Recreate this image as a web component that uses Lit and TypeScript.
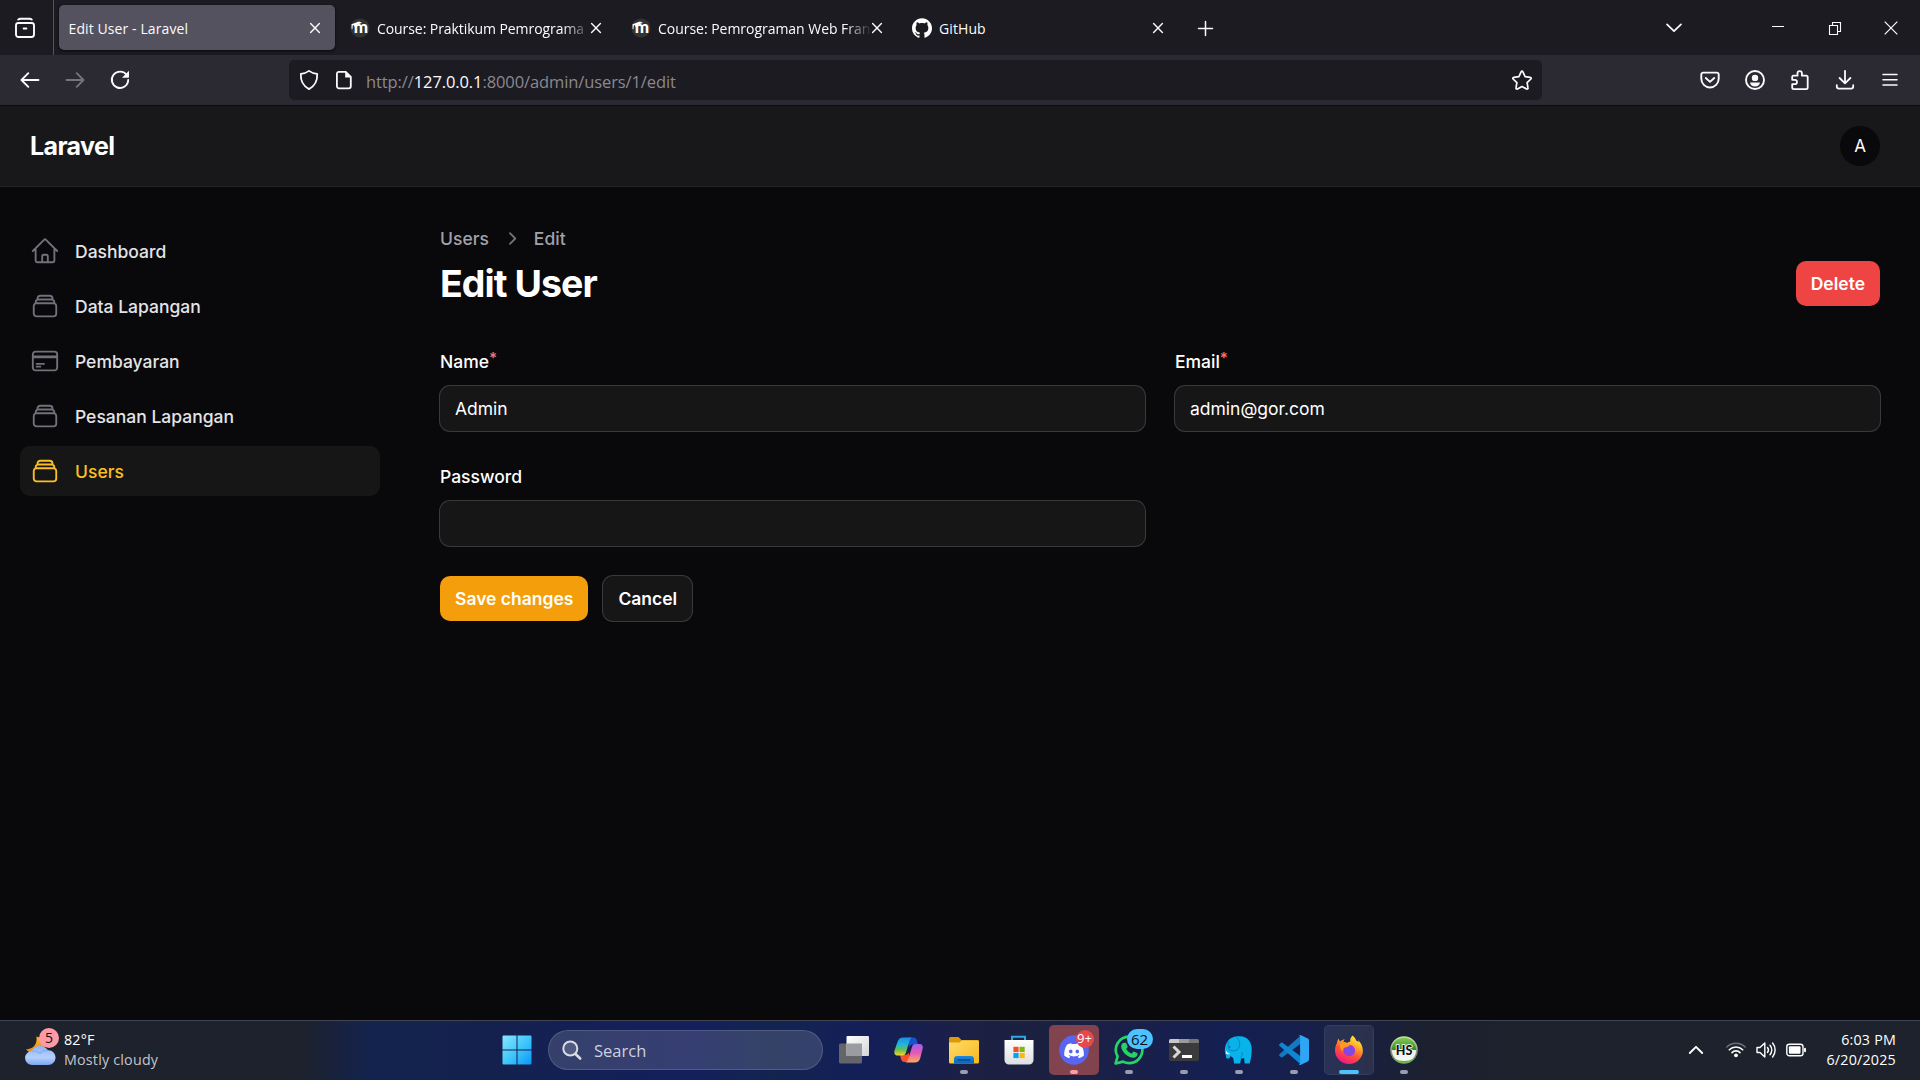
import { LitElement, html, css, svg, nothing, type TemplateResult } from "lit";
import { customElement, property } from "lit/decorators.js";
import { classMap } from "lit/directives/class-map.js";

const icon = (size: number, box: string, body: unknown, cls = "") =>
  html`<svg class="icon ${cls}" width=${size} height=${size} viewBox=${box} fill="none">${body}</svg>`;

const base = css`
  :host { box-sizing: border-box; }
  * { box-sizing: border-box; }
  .icon { display: block; flex: none; overflow: visible; }
  .ln { stroke: currentColor; stroke-linecap: round; stroke-linejoin: round; fill: none; }
`;

const UI = css`"Segoe UI", "Open Sans", "Noto Sans", sans-serif`;

/* ---------- Browser glyphs (20 unit grid) ---------- */
const g = {
  view: icon(20, "0 0 20 20", svg`<g class="ln" stroke-width="1.9"><rect x="1" y="5" width="18" height="14" rx="2.4"/><path d="M3.2 1.6C4 .9 4.6.8 5.4.8h9.2c.8 0 1.4.1 2.2.8M8.6 10.5h2.8"/></g>`),
  close: icon(10, "0 0 10 10", svg`<path class="ln" stroke-width="1.4" d="M.6.6l8.8 8.8M9.4.6.6 9.4"/>`),
  plus: icon(15, "0 0 15 15", svg`<path class="ln" stroke-width="1.5" d="M7.5.5v14M.5 7.5h14"/>`),
  down: icon(16, "0 0 16 16", svg`<path class="ln" stroke-width="1.7" d="M1 4.3 8 11.2 15 4.3"/>`),
  min: icon(14, "0 0 14 14", svg`<path stroke="currentColor" d="M1 5.5h12"/>`),
  restore: icon(14, "0 0 14 14", svg`<path stroke="currentColor" stroke-width="1.1" d="M1.5 4.5h8v9h-8zM4.5 4.500v-3h8v9h-3"/>`),
  winClose: icon(14, "0 0 14 14", svg`<path stroke="currentColor" stroke-width="1.2" d="M.7.7l12.600 12.600M13.300.7.7 13.300"/>`),
  back: icon(20, "0 0 20 20", svg`<path class="ln" stroke-width="1.9" d="M18.500 10H1.800M8.300 3.200 1.500 10l6.800 6.800"/>`),
  fwd: icon(20, "0 0 20 20", svg`<path class="ln" stroke-width="1.9" d="M1.500 10h16.700M11.700 3.200l6.800 6.800-6.800 6.800"/>`),
  reload: icon(20, "0 0 20 20", svg`<path class="ln" stroke-width="1.9" d="M16.800 5.200A8.200 8.200 0 1 0 18.200 10"/><path fill="currentColor" d="M19 .8v6.200a.8.8 0 0 1-.8.8h-6.200z"/>`),
  shield: icon(20, "0 0 20 20", svg`<path class="ln" stroke-width="1.8" d="M10 .9c2.300 1.700 5 2.700 8.200 3 .3 6.600-2 11.900-8.200 15.200C3.800 15.800 1.500 10.500 1.800 3.900c3.200-.3 5.900-1.300 8.200-3z"/>`),
  page: icon(20, "0 0 20 20", svg`<path class="ln" stroke-width="1.8" d="M4.900 1.900h6.900l5 5v9.400a2 2 0 0 1-2 2H4.900a2 2 0 0 1-2-2V3.900a2 2 0 0 1 2-2z"/><path fill="currentColor" d="M11.200 1.200v6.300h6.300z"/>`),
  star: icon(20, "0 0 20 20", svg`<path class="ln" stroke-width="1.7" d="M10 1.200c.4 0 .7.200.9.600l2.200 4.800 5.200.7c.9.100 1.200 1.100.6 1.700l-3.800 3.700.9 5.200c.200.8-.7 1.500-1.400 1.100L10 16.500l-4.600 2.500c-.7.400-1.600-.3-1.400-1.100l.9-5.200L1.100 9c-.6-.6-.3-1.600.6-1.700l5.200-.7 2.200-4.800c.200-.4.500-.6.900-.6z"/>`),
  pocket: icon(20, "0 0 20 20", svg`<g class="ln" stroke-width="1.9"><path d="M3.300 2.600h13.400a2 2 0 0 1 2 2v4.200a8.700 8.700 0 0 1-17.400 0V4.600a2 2 0 0 1 2-2z"/><path d="M5.800 8 10 11.900 14.200 8"/></g>`),
  account: icon(20, "0 0 20 20", svg`<circle class="ln" cx="10" cy="10" r="9" stroke-width="1.900"/><circle cx="10" cy="7.900" r="3.200" fill="currentColor"/><path fill="currentColor" d="M5 12.600h10c-.4 2.500-2.300 4-5 4s-4.600-1.500-5-4z"/>`),
  puzzle: icon(20, "0 0 20 20", svg`<path class="ln" stroke-width="1.8" d="M3.300 5.700h4.200V3.300a2.200 2.200 0 0 1 4.400 0v2.400h4.200a1.600 1.600 0 0 1 1.600 1.600v10.200a1.600 1.600 0 0 1-1.600 1.600H3.800a1.600 1.600 0 0 1-1.600-1.600v-3.300h2.600a2.200 2.200 0 0 0 0-4.400H2.200V6.800a1.100 1.100 0 0 1 1.100-1.100z"/>`),
  download: icon(20, "0 0 20 20", svg`<path class="ln" stroke-width="1.800" d="M10 .8v12.400M4.600 8l5.400 5.400L15.400 8M1.800 15.200v1.400a2 2 0 0 0 2 2h12.400a2 2 0 0 0 2-2v-1.400"/>`),
  menu: icon(16, "0 0 16 16", svg`<path class="ln" stroke-width="1.500" d="M1 2.400h14M1 7.700h14M1 13h14"/>`),
};

const moodle = icon(20, "0 0 20 20", svg`<circle cx="10" cy="10" r="9.600" fill="#333"/><text x="11" y="15" text-anchor="middle" font-family="Lato, sans-serif" font-weight="900" font-size="17" fill="#fff">m</text><path fill="#fff" d="M1.500 6.200 9 3.600l3 1.200-6.500 2.600-.8 2-.6-2.200-1.300 0-.4 4-.8-.2z"/>`);
const github = icon(20, "0 0 24 24", svg`<path fill="#fff" d="M12 .297c-6.630 0-12 5.373-12 12 0 5.303 3.438 9.800 8.205 11.385.6.113.82-.258.82-.577 0-.285-.01-1.040-.015-2.040-3.338.724-4.042-1.610-4.042-1.610C4.422 18.070 3.633 17.700 3.633 17.700c-1.087-.744.084-.729.084-.729 1.205.084 1.838 1.236 1.838 1.236 1.070 1.835 2.809 1.305 3.495.998.108-.776.417-1.305.76-1.605-2.665-.3-5.466-1.332-5.466-5.930 0-1.310.465-2.380 1.235-3.220-.135-.303-.54-1.523.105-3.176 0 0 1.005-.322 3.300 1.230.96-.267 1.980-.399 3-.405 1.020.006 2.040.138 3 .405 2.280-1.552 3.285-1.230 3.285-1.230.645 1.653.24 2.873.12 3.176.765.84 1.230 1.910 1.230 3.220 0 4.610-2.805 5.625-5.475 5.920.42.36.81 1.096.81 2.220 0 1.606-.015 2.896-.015 3.286 0 .315.21.69.825.570C20.565 22.092 24 17.592 24 12.297c0-6.627-5.373-12-12-12"/>`);

interface Tab { title: string; mark?: TemplateResult; active?: boolean; cls?: string; }
const tabs: Tab[] = [
  { title: "Edit User - Laravel", active: true, cls: "t1" },
  { title: "Course: Praktikum Pemrograma", mark: moodle, cls: "t2" },
  { title: "Course: Pemrograman Web Fran", mark: moodle, cls: "t3" },
  { title: "GitHub", mark: github, cls: "t4" },
];

@customElement("browser-chrome")
class BrowserChrome extends LitElement {
  static styles = [base, css`
    :host { display: block; flex: none; font-family: ${UI}; color: #fbfbfe; }
    .tabs { height: 55px; background: #1c1b22; display: flex; align-items: center; }
    .view { width: 54px; height: 55px; border-right: 1px solid #55545c; display: flex; align-items: center; justify-content: center; padding-right: 3px; padding-top: 1px; }
    .strip { display: flex; gap: 5px; padding-left: 5px; flex: 1; align-items: center; }
    .tab { width: 276px; height: 45px; border-radius: 5px; padding: 0 15px 0 9.500px; display: flex; align-items: center; }
    .active { background: #54525e; box-shadow: 0 1px 3px rgba(0, 0, 0, .8); }
    .fav { margin-right: 7.500px; }
    .title { flex: 1; min-width: 0; overflow: hidden; white-space: nowrap; font-size: 14px; line-height: 22px; padding-top: 2px; letter-spacing: .1px; }
    .t2 .title, .t3 .title { letter-spacing: -.07px; -webkit-mask-image: linear-gradient(90deg, #000 calc(100% - 28px), transparent); mask-image: linear-gradient(90deg, #000 calc(100% - 28px), transparent); }
    .t3 .title { letter-spacing: -.03px; }
    .new { width: 44px; display: flex; justify-content: center; padding-top: 2px; }
    .slot { display: flex; align-items: center; justify-content: center; }
    .win { display: flex; padding-right: .500px; }
    .win .slot { width: 56.500px; }
    .list { width: 45px; margin-right: 53.500px; }
    .bar { height: 50px; background: #2b2a33; display: flex; align-items: center; padding: 0 7.500px; }
    .bar .slot { width: 45px; height: 40px; }
    .dim { color: #75747c; }
    .url { margin-left: 146.500px; width: 1253px; height: 40px; border-radius: 5px; background: #1c1b22; display: flex; align-items: center; padding: 0 3px 0 2px; }
    .bar .url .slot { width: 35px; }
    .addr { flex: 1; font-size: 16.500px; line-height: 24px; padding: 3px 0 0 5px; color: #8a898f; white-space: nowrap; letter-spacing: -.1px; }
    .addr b { color: #fbfbfe; font-weight: 400; }
    .gap { flex: 1; }
    .edge { height: 1px; background: #0c0c0d; }
  `];
  render() {
    return html`
      <div class="tabs">
        <div class="view">${g.view}</div>
        <div class="strip">
          ${tabs.map(t => html`<div class="tab ${classMap({ active: !!t.active, [t.cls ?? ""]: true })}">
            ${t.mark ? html`<span class="fav">${t.mark}</span>` : nothing}
            <span class="title">${t.title}</span>${g.close}
          </div>`)}
          <div class="new">${g.plus}</div>
        </div>
        <div class="slot list">${g.down}</div>
        <div class="win"><div class="slot">${g.min}</div><div class="slot">${g.restore}</div><div class="slot">${g.winClose}</div></div>
      </div>
      <div class="bar">
        <div class="slot">${g.back}</div><div class="slot dim">${g.fwd}</div><div class="slot">${g.reload}</div>
        <div class="url">
          <div class="slot">${g.shield}</div><div class="slot">${g.page}</div>
          <div class="addr">http://<b>127.0.0.1</b>:8000/admin/users/1/edit</div>
          <div class="slot">${g.star}</div>
        </div>
        <div class="gap"></div>
        ${[g.pocket, g.account, g.puzzle, g.download, g.menu].map(i => html`<div class="slot">${i}</div>`)}
      </div>
      <div class="edge"></div>`;
  }
}

/* ---------- Admin panel ---------- */
const HOME = "m2.250 12 8.954-8.955c.44-.439 1.152-.439 1.591 0L21.750 12M4.500 9.750v10.125c0 .621.504 1.125 1.125 1.125H9.750v-4.875c0-.621.504-1.125 1.125-1.125h2.250c.621 0 1.125.504 1.125 1.125V21h4.125c.621 0 1.125-.504 1.125-1.125V9.750M8.250 21h8.250";
const STACK = "M6 6.878V6a2.250 2.250 0 0 1 2.250-2.250h7.500A2.250 2.250 0 0 1 18 6v.878m-12 0c.235-.083.487-.128.75-.128h10.500c.263 0 .515.045.75.128m-12 0A2.250 2.250 0 0 0 4.500 9v.878m13.500-3A2.250 2.250 0 0 1 19.500 9v.878m0 0a2.246 2.246 0 0 0-.75-.128H5.250c-.263 0-.515.045-.75.128m15 0A2.250 2.250 0 0 1 21 12v6a2.250 2.250 0 0 1-2.250 2.250H5.250A2.250 2.250 0 0 1 3 18v-6c0-.98.626-1.813 1.500-2.122";
const CARD = "M2.250 8.250h19.500M2.250 9h19.500m-16.500 5.250h6m-6 2.250h3m-3.750 3h15a2.250 2.250 0 0 0 2.250-2.250V6.750A2.250 2.250 0 0 0 19.500 4.500h-15a2.250 2.250 0 0 0-2.250 2.250v10.500A2.250 2.250 0 0 0 4.500 19.500Z";
const nav = [
  { label: "Dashboard", d: HOME },
  { label: "Data Lapangan", d: STACK },
  { label: "Pembayaran", d: CARD },
  { label: "Pesanan Lapangan", d: STACK },
  { label: "Users", d: STACK, active: true },
];

@customElement("form-field")
class FormField extends LitElement {
  @property() label = "";
  @property() value = "";
  @property({ type: Boolean }) required = false;
  static styles = [base, css`
    :host { display: grid; gap: 10px; }
    .label { font-weight: 500; line-height: 30px; height: 30px; padding-top: 1px; color: #fff; display: flex; }
    .req { color: #f87171; font-size: 15px; line-height: 21px; font-weight: 600; }
    .input { height: 45px; border-radius: 10px; background: #161617; box-shadow: 0 0 0 1px #39393b; color: #fff; line-height: 45px; padding: 0 15px; }
  `];
  render() {
    return html`<div class="label">${this.label}${this.required ? html`<span class="req">*</span>` : nothing}</div>
      <div class="input">${this.value}</div>`;
  }
}

@customElement("admin-panel")
class AdminPanel extends LitElement {
  static styles = [base, css`
    :host { display: flex; flex-direction: column; flex: 1; background: #09090b; color: #fff; font-family: Inter, sans-serif; font-size: 17.500px; }
    .top { height: 81px; flex: none; background: #18181a; border-bottom: 1px solid #242426; display: flex; justify-content: space-between; align-items: center; padding: 0 40px 0 30px; }
    .brand { font-size: 25px; font-weight: 700; letter-spacing: -.625px; }
    .avatar { width: 40px; height: 40px; border-radius: 50%; background: #09090b; display: grid; place-items: center; font-size: 17px; }
    .body { flex: 1; display: flex; }
    .nav { width: 400px; padding: 39px 20px; display: flex; flex-direction: column; gap: 5px; }
    .item { height: 50px; border-radius: 10px; padding: 0 10px; display: flex; align-items: center; gap: 15px; font-weight: 500; color: #e4e4e7; }
    .item .icon { color: #71717a; }
    .on, .on .icon { color: #fbbf24; }
    .on { background: #161617; }
    .main { flex: 1; padding: 39px 40px; }
    .crumbs { display: flex; align-items: center; gap: 10px; line-height: 25px; font-weight: 500; color: #a1a1aa; }
    .crumbs .icon { color: #71717a; }
    .head { display: flex; justify-content: space-between; align-items: center; margin: 10px 0 40px; }
    .h1 { font-size: 37.500px; line-height: 45px; font-weight: 700; letter-spacing: -.94px; }
    .btn { height: 45px; border-radius: 10px; padding: 0 15px; line-height: 45px; font-weight: 600; color: #fff; }
    .danger { background: #ef4444; }
    .primary { background: #f59e0b; }
    .gray { background: #161617; box-shadow: 0 0 0 1px #39393b; }
    .form { display: grid; grid-template-columns: 1fr 1fr; gap: 30px; }
    .actions { display: flex; gap: 15px; margin-top: 30px; }
  `];
  render() {
    return html`
      <div class="top"><div class="brand">Laravel</div><div class="avatar">A</div></div>
      <div class="body">
        <div class="nav">${nav.map(n => html`<div class="item ${classMap({ on: !!n.active })}">
          ${icon(30, "0 0 24 24", svg`<path class="ln" stroke-width="1.500" d=${n.d}/>`)}<span>${n.label}</span></div>`)}</div>
        <div class="main">
          <div class="crumbs"><span>Users</span>
            ${icon(25, "0 0 20 20", svg`<path fill="currentColor" d="M8.220 5.220a.75.75 0 0 1 1.060 0l4.250 4.250a.75.75 0 0 1 0 1.060l-4.250 4.250a.75.75 0 0 1-1.060-1.060L11.940 10 8.220 6.280a.75.75 0 0 1 0-1.060Z"/>`)}
            <span>Edit</span></div>
          <div class="head"><div class="h1">Edit User</div><div class="btn danger">Delete</div></div>
          <div class="form">
            <form-field label="Name" value="Admin" required></form-field>
            <form-field label="Email" value="admin@gor.com" required></form-field>
            <form-field label="Password"></form-field>
          </div>
          <div class="actions"><div class="btn primary">Save changes</div><div class="btn gray">Cancel</div></div>
        </div>
      </div>`;
  }
}

/* ---------- Taskbar ---------- */
const b30 = (body: unknown) => icon(30, "0 0 30 30", body);
const a = {
  weather: icon(34, "0 0 34 34", svg`<defs><linearGradient id="mo" x1="0" y1="0" x2="0" y2="1"><stop stop-color="#f9b931"/><stop offset="1" stop-color="#ee8113"/></linearGradient><linearGradient id="cl" x1="0" y1="0" x2="0" y2="1"><stop stop-color="#8fb4f5"/><stop offset=".6" stop-color="#b4d0fb"/><stop offset="1" stop-color="#7fa5f0"/></linearGradient></defs>
    <path fill="url(#mo)" d="M11.500 3.500c6 1.500 9.500 7 7.500 12.500-3 6.500-12 7-18 .5 7.500-.5 11.500-5.500 10.500-13z"/>
    <path fill="url(#cl)" d="M7.500 32a7 7 0 0 1-.8-14c1.600-3.100 4.700-5 8.300-5 3.400 0 6.300 1.700 7.900 4.300 4.400-.3 7.600 3.100 7.600 7.200 0 4.300-3.200 7.500-7.500 7.500z"/><path d="M7 18.500c3-1 6-.2 8 2 1.500-2 4.500-3.300 8-3" stroke="#86aaf0" stroke-width="1.200"/>`),
  start: b30(svg`<defs><linearGradient id="st" gradientUnits="userSpaceOnUse" x1="0" y1="0" x2="30" y2="30"><stop stop-color="#8be6ff"/><stop offset=".5" stop-color="#42c8fb"/><stop offset="1" stop-color="#0a94f7"/></linearGradient></defs><path fill="url(#st)" d="M1.500.5H14.500V14.500H.5V1.500a1 1 0 0 1 1-1zM15.500 .5h13a1 1 0 0 1 1 1V14.500H15.500zM.5 15.500H14.500v14H1.500a1 1 0 0 1-1-1zM15.500 15.500h14v13a1 1 0 0 1-1 1H15.500z"/>`),
  search: icon(20, "0 0 20 20", svg`<circle cx="8.300" cy="8.500" r="7" fill="rgba(255,255,255,.14)" stroke="#d9dce6" stroke-width="2"/><path d="m13.500 14 4.700 4.500" stroke="#d9dce6" stroke-width="2.600" stroke-linecap="round"/>`),
  tasks: b30(svg`<defs><linearGradient id="tv" x1="0" y1="0" x2="1" y2="1"><stop stop-color="#fff"/><stop offset="1" stop-color="#d5d5d8"/></linearGradient></defs><rect x="0" y="8.500" width="23" height="20" rx="1.500" fill="#63656a"/><rect x="7.500" y="1" width="22.500" height="20" rx="1" fill="url(#tv)"/><path fill="#9a9ca1" d="M7.500 8.500H23V21H7.500z"/>`),
  copilot: b30(svg`<defs><linearGradient id="c1" x1="0" y1="0" x2="0" y2="1"><stop stop-color="#1a8fe8"/><stop offset=".4" stop-color="#22b7d6"/><stop offset=".7" stop-color="#6cc04a"/><stop offset="1" stop-color="#ffd02f"/></linearGradient><linearGradient id="c2" x1="0" y1="0" x2="0" y2="1"><stop stop-color="#a15cf0"/><stop offset=".5" stop-color="#e45bb4"/><stop offset="1" stop-color="#ffab5e"/></linearGradient></defs>
    <path fill="#1553cf" d="M14 2.500h5.500c2 0 2.700 1 3.300 3l1.200 4h-5c-2 0-3 1-3.500 3z"/><path fill="#f2522d" d="M16 27h-5.500c-2 0-2.900-1-3.500-3l-1-4h5c2 0 3-1 3.600-3z"/>
    <path fill="url(#c1)" d="M9.500 2.500h8.500c-1.500.5-2 1.700-2.500 3.500L12 17.500c-.6 2-1.600 3-3.600 3H4c-3 0-4.300-2-3.500-5L3.700 6.500C4.600 3.800 6.300 2.500 9.500 2.500z"/>
    <path fill="url(#c2)" d="M20.500 27.500H11.500c1.500-.5 2.300-1.700 2.800-3.500L18 12c.6-2 1.600-3 3.600-3H25c3.300 0 4.400 2 3.600 5l-2.500 9.500c-.8 2.700-2.400 4-5.600 4z"/>`),
  files: b30(svg`<defs><linearGradient id="fo" x1="0" y1="0" x2="1" y2="1"><stop stop-color="#ffdc6b"/><stop offset="1" stop-color="#f9b71c"/></linearGradient><linearGradient id="fb" x1="0" y1="0" x2="0" y2="1"><stop stop-color="#1c8be0"/><stop offset="1" stop-color="#0b64b8"/></linearGradient></defs><path fill="#dc9b06" d="M1.500 2h8l3 3h16A1.500 1.500 0 0 1 30 6.500V14H0V3.500A1.500 1.500 0 0 1 1.500 2z"/><path fill="url(#fo)" d="M0 7.500h10.500L13 5.500h16a1 1 0 0 1 1 1V27a1.500 1.500 0 0 1-1.500 1.500h-27A1.500 1.500 0 0 1 0 27z"/><path fill="url(#fb)" d="M5 28.500V24a3 3 0 0 1 3-3h14a3 3 0 0 1 3 3v4.500z"/><path stroke="#0c4a8c" stroke-width="1.300" stroke-linecap="round" d="M9 25h12"/>`),
  store: b30(svg`<defs><linearGradient id="so" x1="0" y1="0" x2="0" y2="1"><stop stop-color="#fff"/><stop offset="1" stop-color="#dcdee1"/></linearGradient></defs><g transform="translate(-.5 0)"><path d="M8.500 7V1.800h13V7" stroke="#2aa9e8" stroke-width="2"/><path fill="url(#so)" d="M1 5h29v20a4.500 4.500 0 0 1-4.500 4.500h-20A4.500 4.500 0 0 1 1 25z"/><path fill="#f25022" d="M9.900 11.800h5.200v5.200H9.900z"/><path fill="#7fba00" d="M16 11.800h5.200v5.200H16z"/><path fill="#00a4ef" d="M9.900 17.900h5.200v5.200H9.900z"/><path fill="#ffb900" d="M16 17.900h5.200v5.200H16z"/></g>`),
  discord: b30(svg`<circle cx="15" cy="15" r="14.800" fill="#5865f2"/><path transform="translate(5.200 5.800) scale(.82)" fill="#fff" d="M20.317 4.370a19.791 19.791 0 0 0-4.885-1.515.074.074 0 0 0-.079.037c-.211.375-.445.865-.608 1.250-1.845-.276-3.680-.276-5.487 0-.164-.393-.406-.874-.618-1.250a.077.077 0 0 0-.079-.037 19.736 19.736 0 0 0-4.885 1.515.07.07 0 0 0-.032.028C.533 9.046-.319 13.580.099 18.058a.082.082 0 0 0 .031.056c2.053 1.508 4.041 2.423 5.993 3.029a.078.078 0 0 0 .084-.028c.462-.63.873-1.295 1.226-1.994a.076.076 0 0 0-.042-.106 13.107 13.107 0 0 1-1.872-.892.077.077 0 0 1-.008-.128c.126-.094.252-.192.372-.291a.074.074 0 0 1 .078-.011c3.928 1.793 8.180 1.793 12.061 0a.074.074 0 0 1 .079.010c.12.099.246.198.373.292a.077.077 0 0 1-.007.128 12.299 12.299 0 0 1-1.873.891.077.077 0 0 0-.041.107c.36.698.772 1.363 1.225 1.993a.076.076 0 0 0 .084.029c1.961-.607 3.950-1.522 6.002-3.029a.077.077 0 0 0 .031-.055c.5-5.177-.838-9.674-3.549-13.660a.061.061 0 0 0-.031-.029zM8.020 15.331c-1.183 0-2.157-1.086-2.157-2.419s.956-2.419 2.157-2.419c1.211 0 2.176 1.095 2.157 2.419 0 1.333-.956 2.419-2.157 2.419zm7.975 0c-1.183 0-2.157-1.086-2.157-2.419s.955-2.419 2.157-2.419c1.211 0 2.176 1.095 2.157 2.419 0 1.333-.946 2.419-2.157 2.419z"/>`),
  whatsapp: b30(svg`<path d="M15 1.600A13.300 13.300 0 0 1 15.200 28.200c-2.300 0-4.400-.6-6.200-1.600L1.600 28.500l2-7A13.300 13.300 0 0 1 15 1.600z" stroke="#25d366" stroke-width="2.700" stroke-linejoin="round"/><path fill="#25d366" d="M10 7.800h1.400c.5 0 .8.200 1 .7l1.200 2.900c.2.400.1.700-.2 1.100l-1.200 1.500c1.300 2.200 3 3.700 5.400 4.700l1.500-1.700c.3-.4.700-.5 1.100-.3l2.800 1.400c.5.200.7.500.6 1-.2 2.400-2 3.700-4.200 3.700-5.600 0-12.200-6.300-12.200-11.500 0-1.500 1.200-3.500 2.800-3.500z"/>`),
  terminal: b30(svg`<rect y="4" width="30" height="22" rx="1.800" fill="#3b3b3d"/><path fill="#c8c8c8" d="M1.800 4H10v4H0V5.800A1.800 1.800 0 0 1 1.800 4z"/><path fill="#9b9b9b" d="M10 4h10v4H10z"/><path fill="#777" d="M20 4h8.200A1.800 1.800 0 0 1 30 5.800V8H20z"/><path d="m4.500 11.500 5.500 5.500-5.500 5.500" stroke="#d8d8d8" stroke-width="3"/><path fill="#fff" d="M13 20h10v3H13z"/>`),
  herd: b30(svg`<g transform="translate(-.8 0)"><path fill="#08b2ea" d="M4 7C6 3 11 1 17 1.200 24.500 1.500 28.500 7 28.500 14c0 5-.4 9-2 14.500h-5l-.6-5.500c-1 .5-2 .7-3 .7l-1 4.800h-6L10 23c-1.200-.5-2-1.300-2.600-2.300-.4 2.300-1.700 3.200-3.400 2.800-1.500-.3-1.600-1.800-1-2.500C1 17.500 1.200 11 4 7z"/><path d="M5.500 6.500C4 10 5 15 8 15.500c5 1.500 8.500-2 8.500-6.500 0-3-1.300-5.500-3.500-7M19 17c.3 2.500-.5 5-2 6.500" stroke="#057fae" stroke-width=".9"/><path fill="#fff" d="M3 15.500c.6 2 2 3 4 3.200-1 1-3.600.7-4.300-.7z"/><circle cx="6.500" cy="12" r=".8" fill="#045f85"/></g>`),
  code: b30(svg`<path fill="#1478c2" d="M22 .3v8.200L3.500 22.300c-.5.400-1 .3-1.400 0L.4 20.700a1 1 0 0 1 0-1.500z"/><path fill="#0f86d3" d="M22 29.700v-8.200L3.500 7.700c-.5-.4-1-.3-1.400 0L.4 9.300a1 1 0 0 0 0 1.500z"/><path fill="#2ea5f5" d="M22 .2 28.800 3.500c.7.400 1.200 1 1.200 1.900v19.200c0 .9-.5 1.500-1.200 1.900L22 29.800c-1.200.4-2 .1-2.800-.6.900.5 1.900.1 1.900-1.200V2c0-1.300-1-1.700-1.900-1.200.8-.7 1.600-1 2.800-.6z"/>`),
  firefox: b30(svg`<defs><linearGradient id="ff" x1=".8" y1="0" x2=".3" y2="1"><stop stop-color="#fff04a"/><stop offset=".3" stop-color="#ffb52a"/><stop offset=".6" stop-color="#ff5634"/><stop offset="1" stop-color="#f0128a"/></linearGradient><radialGradient id="fp"><stop stop-color="#6b55e8"/><stop offset="1" stop-color="#9b3bdc"/></radialGradient></defs><path fill="url(#ff)" d="M18.500.5c2 1.500 3.200 3.300 3.800 5.200 1.200.4 1.800 1 2.200 1.800 0-1-.2-1.700-.5-2.500 3 2.500 4.900 6.500 4.900 10.800C28.900 23 22.700 29 15 29S1 23 1 15.500c0-3.500 1-6.200 2-7.500.2-1.800.7-3.200 1.600-4.500.3 1.500.8 2.300 1.700 3C7.600 5 9.300 4.400 10.800 4.200c-.8.8-1.300 1.600-1.500 2.600 1.500.1 3 .5 4 1.200 1-.8 2-1.300 3-1.200-.5-2.300.4-4.600 2.200-6.300z"/><circle cx="15.300" cy="15.500" r="5.800" fill="url(#fp)"/><path fill="#ff9b24" d="M6 9c3.300-1.200 6.800-.8 9.800 1.200-1.500 1.500-3 2-5 2.300-1.900.3-2.500 2.500-1.400 4.300C7 15.500 5.500 12.500 6 9z"/>`),
  hs: b30(svg`<defs><linearGradient id="hg" x1="0" y1="0" x2="0" y2="1"><stop stop-color="#8ccf5a"/><stop offset=".5" stop-color="#2e8a24"/><stop offset=".5" stop-color="#e9ece9"/><stop offset="1" stop-color="#fafafa"/></linearGradient><linearGradient id="hb" x1="0" y1="0" x2="0" y2="1"><stop stop-color="#bfe3a0"/><stop offset=".7" stop-color="#7d8a7a"/><stop offset="1" stop-color="#6fb04a"/></linearGradient></defs><circle cx="15" cy="15" r="13" fill="url(#hg)" stroke="url(#hb)" stroke-width="1.600"/><path fill="#5bb336" d="M6 24c5 2.500 13 2.500 18 0-2 2-5 3.300-9 3.300s-7-1.300-9-3.300z"/><text x="15" y="19.500" text-anchor="middle" font-family="Lato, sans-serif" font-weight="900" font-size="12.500" fill="#111" stroke="#fff" stroke-width="1.600" paint-order="stroke">HS</text>`),
  up: icon(16, "0 0 16 16", svg`<path class="ln" stroke-width="1.900" d="m1.800 11 6.200-6.200L14.200 11"/>`),
  wifi: icon(20, "0 0 20 20", svg`<g class="ln" stroke-width="1.600"><path stroke-opacity=".35" d="M.8 7a13 13 0 0 1 18.400 0"/><path d="M3.300 9.800a9.500 9.500 0 0 1 13.400 0M6 12.600a5.600 5.600 0 0 1 8 0"/></g><circle cx="10" cy="15.300" r="1.900" fill="currentColor"/>`),
  sound: icon(20, "0 0 20 20", svg`<g class="ln" stroke-width="1.400"><path d="M1 7.500h3L8.800 3v14L4 12.500H1z"/><path d="M11.500 7.500a4 4 0 0 1 0 5M14 5.200a7.300 7.300 0 0 1 0 9.600M16.600 3a11 11 0 0 1 0 14"/></g>`),
  battery: icon(20, "0 0 20 20", svg`<rect class="ln" x=".8" y="4.200" width="16.200" height="11.600" rx="2.600" stroke-width="1.400"/><rect x="2.900" y="6.300" width="11.600" height="7.400" rx="1" fill="currentColor"/><path class="ln" stroke-width="1.900" d="M19 8.800v2.400"/>`),
};

interface App { ic: TemplateResult; run?: "idle" | "alert" | "focus"; badge?: string; cls?: string; }
const apps: App[] = [
  { ic: a.tasks }, { ic: a.copilot }, { ic: a.files, run: "idle" }, { ic: a.store },
  { ic: a.discord, run: "alert", badge: "9+", cls: "red" }, { ic: a.whatsapp, run: "idle", badge: "62", cls: "blue" },
  { ic: a.terminal, run: "idle" }, { ic: a.herd, run: "idle" }, { ic: a.code, run: "idle" },
  { ic: a.firefox, run: "focus", cls: "current" }, { ic: a.hs, run: "idle" },
];

@customElement("task-bar")
class TaskBar extends LitElement {
  static styles = [base, css`
    :host { height: 60px; flex: none; display: flex; align-items: center; padding-bottom: 1px; font-family: ${UI}; color: #fff; border-top: 1px solid #42454f;
      background: linear-gradient(90deg, #1e222c 0, #1d222c 300px, #14234e 370px, #14214f 500px, #151f5c 690px, #132450 770px, #141f58 870px, #1b2045 965px, #1c2040 1035px, #1a2048 1110px, #141f52 1230px, #172049 1320px, #1c202f 1430px, #1d222c 1540px); }
    .weather { width: 492px; padding-left: 25px; display: flex; align-items: center; gap: 5px; position: relative; }
    .count { position: absolute; left: 39px; top: -2px; width: 20px; height: 20px; border-radius: 50%; background: #ff99a4; color: #111; font-size: 14px; line-height: 20px; text-align: center; }
    .two { font-size: 14.300px; line-height: 20px; letter-spacing: .2px; }
    .muted { color: #c3c5ca; }
    .slot { width: 50px; height: 50px; display: grid; place-items: center; border-radius: 5px; position: relative; }
    .search { width: 275px; height: 40px; margin: 0 5.500px 0 6px; border-radius: 20px; border: 1px solid rgba(255, 255, 255, .14); background: rgba(255, 255, 255, .14); display: flex; align-items: center; padding-left: 13px; gap: 12px; font-size: 16.500px; color: #cfd2de; }
    .apps { display: flex; gap: 5px; flex: 1; }
    .dot { position: absolute; left: 21px; bottom: 1px; width: 8px; height: 4px; border-radius: 2px; background: #9a9db0; }
    .alert { background: #ff99a4; }
    .focus { left: 15px; width: 20px; background: #4cc2ff; }
    .red { background: #81434d; }
    .current { background: rgba(255, 255, 255, .08); box-shadow: inset 0 0 0 1px rgba(255, 255, 255, .06); }
    .badge { position: absolute; height: 20px; border-radius: 10px; line-height: 20px; text-align: center; font-size: 14px; }
    .red .badge { left: 27px; top: 5px; width: 18px; height: 18px; line-height: 17px; background: #e5484d; color: #fff; font-size: 13px; }
    .blue .badge { left: 23px; top: 4px; width: 26px; font-size: 15px; letter-spacing: -.2px; background: #4cc2ff; color: #10121a; }
    .tray { display: flex; align-items: center; }
    .tray .slot { width: 30px; }
    .tray .more { width: 40px; margin-right: 5px; }
    .clock { text-align: right; width: 85px; margin-right: 24px; }
  `];
  render() {
    return html`
      <div class="weather">${a.weather}<span class="count">5</span>
        <div class="two"><div>82°F</div><div class="muted">Mostly cloudy</div></div></div>
      <div class="slot">${a.start}</div>
      <div class="search">${a.search}<span>Search</span></div>
      <div class="apps">${apps.map(p => html`<div class="slot ${p.cls ?? ""}">${p.ic}
        ${p.badge ? html`<span class="badge">${p.badge}</span>` : nothing}
        ${p.run ? html`<span class="dot ${p.run}"></span>` : nothing}</div>`)}</div>
      <div class="tray"><div class="slot more">${a.up}</div>
        <div class="slot">${a.wifi}</div><div class="slot">${a.sound}</div><div class="slot">${a.battery}</div>
        <div class="two clock"><div>6:03 PM</div><div>6/20/2025</div></div></div>`;
  }
}

@customElement("app-root")
class AppRoot extends LitElement {
  static styles = css`:host { display: flex; flex-direction: column; width: 1920px; height: 1080px; overflow: hidden; }`;
  render() {
    return html`<browser-chrome></browser-chrome><admin-panel></admin-panel><task-bar></task-bar>`;
  }
}
